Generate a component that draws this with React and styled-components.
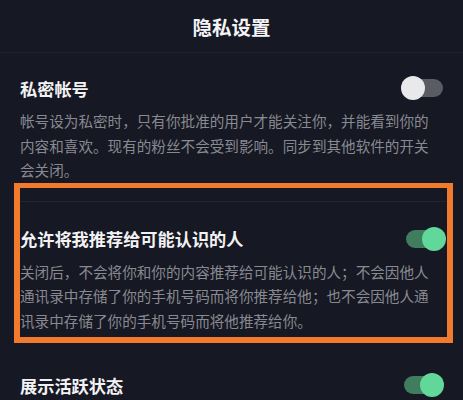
import React from "react";
import styled, { createGlobalStyle } from "styled-components";

const GlobalStyle = createGlobalStyle`
  body {
    margin: 0;
    background: #161823;
    font-family: "Noto Sans CJK SC", "Noto Sans", sans-serif;
  }
`;

const Page = styled.div`
  width: 463px;
  height: 400px;
  overflow: hidden;
  background: #161823;
`;

const Header = styled.div`
  height: 52px;
  display: flex;
  align-items: center;
  justify-content: center;
  border-bottom: 1px solid #20222d;
  color: #f4f4f6;
  font-size: 19.5px;
  font-weight: 600;
`;

const Section = styled.div`
  padding: ${(p) => p.pad || "20px 19px 0 20px"};
`;

const Highlight = styled.div`
  margin: 0 10px 0 14px;
  border: 6px solid #f27a2c;
  border-top-width: 5px;
  padding: 0 1px 4px 0;
`;

const Divider = styled.div`
  height: 1px;
  background: #222431;
  margin: 13px 0 22px;
`;

const Row = styled.div`
  height: 30px;
  display: flex;
  align-items: center;
  justify-content: space-between;
`;

const Title = styled.div`
  color: #f2f2f4;
  font-size: 17.2px;
  font-weight: 600;
`;

const Desc = styled.p`
  margin: 6px 0 0;
  max-width: 422px;
  color: #898a91;
  font-size: 14.6px;
  line-height: 24.5px;
`;

const Toggle = styled.div`
  position: relative;
  width: 43px;
  height: 24px;
  flex-shrink: 0;
`;

const Track = styled.div`
  position: absolute;
  left: 3px;
  right: 1px;
  top: 3px;
  height: 18px;
  border-radius: 9px;
  background: ${(p) => (p.on ? "#3f7d5e" : "#5a5b63")};
`;

const Knob = styled.div`
  position: absolute;
  top: 0;
  left: ${(p) => (p.on ? "19px" : "0")};
  width: 24px;
  height: 24px;
  border-radius: 50%;
  background: ${(p) => (p.on ? "#62d79a" : "#e9e9ec")};
`;

function Switch({ on }) {
  return (
    <Toggle>
      <Track on={on} />
      <Knob on={on} />
    </Toggle>
  );
}

export default function App() {
  return (
    <Page>
      <GlobalStyle />
      <Header>隐私设置</Header>
      <Section>
        <Row>
          <Title>私密帐号</Title>
          <Switch />
        </Row>
        <Desc>
          帐号设为私密时，只有你批准的用户才能关注你，并能看到你的内容和喜欢。现有的粉丝不会受到影响。同步到其他软件的开关会关闭。
        </Desc>
      </Section>
      <Highlight>
        <Divider />
        <Row>
          <Title>允许将我推荐给可能认识的人</Title>
          <Switch on />
        </Row>
        <Desc>
          关闭后，不会将你和你的内容推荐给可能认识的人；不会因他人通讯录中存储了你的手机号码而将你推荐给他；也不会因他人通讯录中存储了你的手机号码而将他推荐给你。
        </Desc>
      </Highlight>
      <Section pad="27px 19px 0 20px">
        <Row>
          <Title>展示活跃状态</Title>
          <Switch on />
        </Row>
      </Section>
    </Page>
  );
}
